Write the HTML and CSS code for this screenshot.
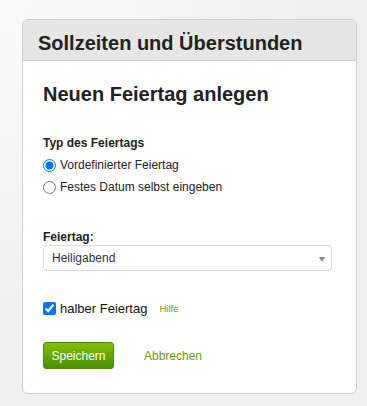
FILE: index.html
```html
<!DOCTYPE html>
<html lang="de">
<head>
  <meta charset="UTF-8" />
  <meta name="viewport" content="width=device-width, initial-scale=1" />
  <title>Sollzeiten und Überstunden</title>
  <link rel="stylesheet" href="styles.css">
</head>
<body>

  <div class="panel">
    <div class="panel-head">
      <h1>Sollzeiten und Überstunden</h1>
    </div>

    <div class="panel-body">
      <h2>Neuen Feiertag anlegen</h2>

      <div class="group">
        <div class="group-label">Typ des Feiertags</div>
        <label class="option">
          <input type="radio" name="typ" checked>
          Vordefinierter Feiertag
        </label>
        <label class="option">
          <input type="radio" name="typ">
          Festes Datum selbst eingeben
        </label>
      </div>

      <div class="field">
        <label for="feiertag">Feiertag:</label>
        <div class="select" id="feiertag">
          <span>Heiligabend</span>
          <span class="arrow"></span>
        </div>
      </div>

      <div class="half">
        <label class="check">
          <input type="checkbox" checked>
          halber Feiertag
        </label>
        <a href="#" class="help">Hilfe</a>
      </div>

      <div class="actions">
        <button class="btn-save">Speichern</button>
        <a href="#" class="cancel">Abbrechen</a>
      </div>
    </div>
  </div>

</body>
</html>
```

FILE: styles.css
```css
body {
  margin: 0;
  padding: 19px 11px 0 22px;
  font-family: "Liberation Sans", Arial, sans-serif;
  color: #222;
  background: radial-gradient(circle at 0 0, #fafafa 0, #f0f0f0 60%);
  height: 406px;
  box-sizing: border-box;
}
.panel {
  width: 335px;
  box-sizing: border-box;
  border: 1px solid #cfcfcf;
  border-radius: 6px;
  background-color: #fff;
  overflow: hidden;
}
.panel-head {
  background-color: #e6e6e6;
  border-bottom: 1px solid #cfcfcf;
  height: 41px;
  box-sizing: border-box;
  padding: 12px 15px 0;
}
.panel-head h1 {
  margin: 0;
  font-size: 20px;
  line-height: 22px;
  color: #222;
}
.panel-body {
  padding: 21px 24px 24px 20px;
}
.panel-body h2 {
  margin: 0 0 29px;
  font-size: 20px;
  line-height: 24px;
  color: #222;
}
.group {
  margin-bottom: 32px;
}
.group-label {
  font-size: 12px;
  font-weight: bold;
  line-height: 16px;
  margin-bottom: 3px;
}
.option {
  display: flex;
  align-items: center;
  font-size: 12px;
  line-height: 22px;
  color: #222;
}
.option input {
  margin: 0 4px 0 0;
  width: 13px;
  height: 13px;
}
.field label {
  display: block;
  font-size: 12px;
  font-weight: bold;
  line-height: 15px;
  margin-bottom: 0;
}
.select {
  display: flex;
  justify-content: space-between;
  align-items: center;
  height: 26px;
  box-sizing: border-box;
  border: 1px solid #dadada;
  border-radius: 4px;
  padding: 0 6px 0 8px;
  font-size: 12px;
  color: #333;
}
.select .arrow {
  width: 0;
  height: 0;
  border-left: 3.5px solid transparent;
  border-right: 3.5px solid transparent;
  border-top: 5px solid #888;
  margin-top: 2px;
}
.half {
  display: flex;
  align-items: center;
  margin-top: 30px;
}
.check {
  display: flex;
  align-items: center;
  font-size: 13px;
  color: #111;
}
.check input {
  margin: 0 4px 0 0;
  width: 13px;
  height: 13px;
}
.help {
  margin-left: 12px;
  font-size: 9.5px;
  color: #6aa300;
  text-decoration: none;
}
.actions {
  display: flex;
  align-items: center;
  margin-top: 26px;
}
.btn-save {
  width: 71px;
  height: 27px;
  border: 1px solid #4c8a00;
  border-radius: 3px;
  background: linear-gradient(#80bf06, #4a8f00);
  color: #fff;
  font-family: "Liberation Sans", Arial, sans-serif;
  font-size: 12px;
  padding: 0;
  cursor: pointer;
}
.cancel {
  margin-left: 30px;
  font-size: 12px;
  color: #6c9a12;
  text-decoration: none;
}
```
